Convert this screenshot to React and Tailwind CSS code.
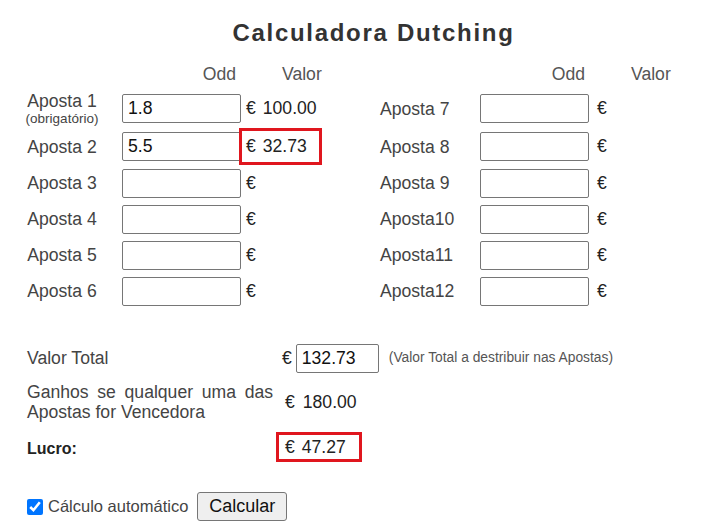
import { useState } from 'react';

const left = [
  { label: 'Aposta 1', odd: '1.8', val: '100.00', h: 'h-[39px]', req: true },
  { label: 'Aposta 2', odd: '5.5', val: '32.73', h: 'h-[37px]', hl: true },
  { label: 'Aposta 3', odd: '', val: '', h: 'h-[36px]' },
  { label: 'Aposta 4', odd: '', val: '', h: 'h-[36px]' },
  { label: 'Aposta 5', odd: '', val: '', h: 'h-[36px]' },
  { label: 'Aposta 6', odd: '', val: '', h: 'h-[36px]' },
];
const right = ['Aposta 7', 'Aposta 8', 'Aposta 9', 'Aposta10', 'Aposta11', 'Aposta12'];

const inputCls =
  'h-[29px] border border-[#767676] rounded-[2px] px-[5px] text-[17.6px] text-[#111] bg-white outline-none';

const App = () => {
  const [auto, setAuto] = useState(true);

  return (
    <div className="w-[707px] h-[529px] bg-white font-['Liberation_Sans',Arial,sans-serif] text-[17.6px] text-[#444] overflow-hidden">
      <h1 className="pt-[19px] pl-[40px] text-center text-[24px] leading-[28px] font-bold tracking-[1.7px] text-[#333]">
        Calculadora Dutching
      </h1>

      {/* column headers */}
      <div className="flex mt-[17px] leading-[21px] text-[#555]">
        <div className="w-[122px]" />
        <div className="w-[119px] text-right pr-[5px]">Odd</div>
        <div className="w-[139px] pl-[41px]">Valor</div>
        <div className="w-[100px]" />
        <div className="w-[109px] text-right pr-[4px]">Odd</div>
        <div className="pl-[42px]">Valor</div>
      </div>

      <div className="mt-[4px]">
        {left.map((row, i) => (
          <div key={row.label} className={`flex items-center ${row.h}`}>
            <div className="w-[122px] pl-[20px] pr-[18px] text-center">
              <div className="leading-[20px]">{row.label}</div>
              {row.req && <div className="text-[13.5px] leading-[15px]">(obrigatório)</div>}
            </div>
            <input className={`${inputCls} w-[119px]`} defaultValue={row.odd} />
            <div className="w-[139px] flex items-center text-[#222]">
              {row.hl ? (
                <span className="ml-[1px] pl-[4px] w-[77px] h-[31px] flex items-center outline-3 outline-[#e0161e]">
                  <span>€</span>
                  <span className="ml-[7px]">{row.val}</span>
                </span>
              ) : (
                <span className="pl-[5px] flex">
                  <span>€</span>
                  {row.val && <span className="ml-[7px]">{row.val}</span>}
                </span>
              )}
            </div>
            <div className="w-[100px] leading-[20px]">{right[i]}</div>
            <input className={`${inputCls} w-[109px]`} defaultValue="" />
            <span className="pl-[8px] text-[#222]">€</span>
          </div>
        ))}
      </div>

      {/* totals */}
      <div className="px-[27px] mt-[33px]">
        <div className="flex items-center h-[33px]">
          <div className="w-[252px]">Valor Total</div>
          <span className="pl-[3px] text-[#222]">€</span>
          <input className={`${inputCls} w-[83px] ml-[4px] rounded-[1px]`} defaultValue="132.73" />
          <span className="ml-[10px] text-[13.8px] text-[#555]">(Valor Total a destribuir nas Apostas)</span>
        </div>

        <div className="flex items-center mt-[7px] h-[40px]">
          <div className="w-[246px] mr-[6px] text-justify leading-[20px]">
            Ganhos se qualquer uma das Apostas for Vencedora
          </div>
          <span className="pl-[6px] text-[#222]">€</span>
          <span className="ml-[8px] text-[#222]">180.00</span>
        </div>

        <div className="flex items-center mt-[10px] h-[30px]">
          <div className="w-[252px] pt-[4px] text-[16px] font-bold text-[#222]">Lucro:</div>
          <span className="w-[80px] h-[24px] pl-[6px] flex items-center text-[#222] outline-3 outline-[#e0161e]">
            <span>€</span>
            <span className="ml-[7px]">47.27</span>
          </span>
        </div>

        <div className="flex items-center mt-[30px] h-[29px]">
          <input
            type="checkbox"
            checked={auto}
            onChange={(e) => setAuto(e.target.checked)}
            className="w-[16px] h-[16px] m-0 accent-[#0075ff]"
          />
          <span className="ml-[5px] text-[16.5px] text-[#444]">Cálculo automático</span>
          <button className="ml-[9px] h-[29px] px-[11px] text-[18px] text-[#111] bg-[#efefef] border border-[#767676] rounded-[3px]">
            Calcular
          </button>
        </div>
      </div>
    </div>
  );
};

export default App;
